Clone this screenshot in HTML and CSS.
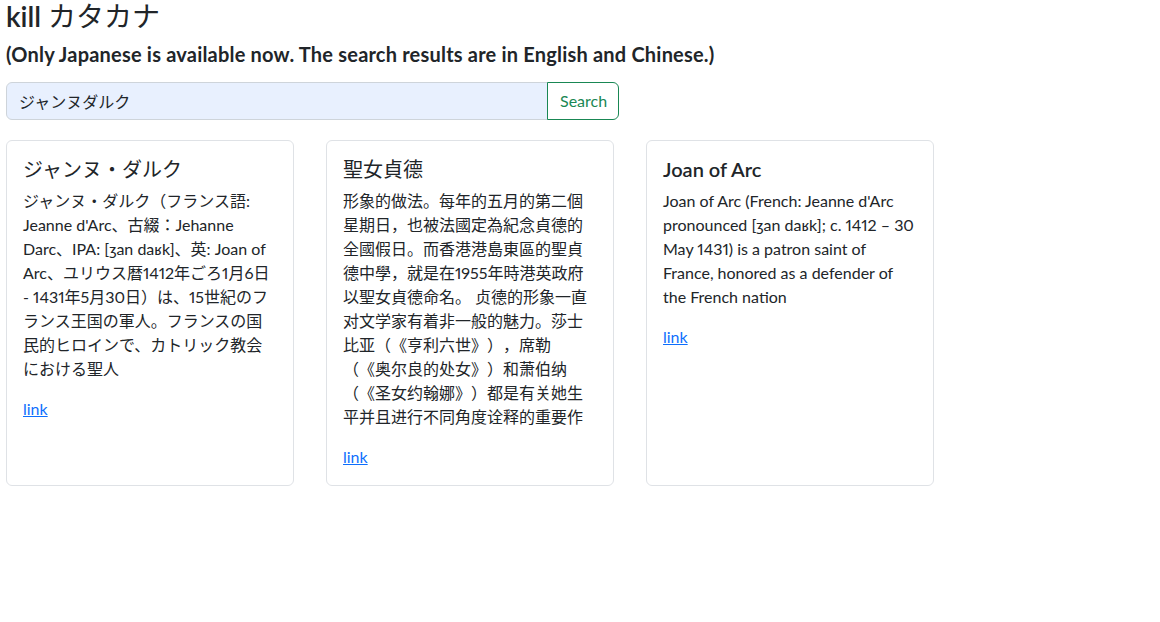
FILE: index.html
```html
<!DOCTYPE html>
<html lang="ja">
<head>
<meta charset="utf-8">
<title>kill カタカナ</title>
<link rel="stylesheet" href="styles.css">
</head>
<body>
<main class="page">
  <h3 class="page-title">kill <span class="cjk">カタカナ</span></h3>
  <h5 class="page-note">(Only Japanese is available now. The search results are in English and Chinese.)</h5>
  <form class="search">
    <input class="search-input" type="text" value="ジャンヌダルク">
    <button class="search-btn" type="button">Search</button>
  </form>
  <section class="cards">
    <article class="card">
      <h5 class="card-title cjk">ジャンヌ・ダルク</h5>
      <p class="card-text">ジャンヌ・ダルク（フランス語: Jeanne d'Arc、古綴：Jehanne Darc、IPA: [ʒan daʁk]、英: Joan of Arc、ユリウス暦1412年ごろ1月6日 - 1431年5月30日）は、15世紀のフランス王国の軍人。フランスの国民的ヒロインで、カトリック教会における聖人</p>
      <a class="card-link" href="#">link</a>
    </article>
    <article class="card">
      <h5 class="card-title cjk">聖女貞德</h5>
      <p class="card-text">形象的做法。每年的五月的第二個星期日，也被法國定為紀念貞德的全國假日。而香港港島東區的聖貞德中學，就是在1955年時港英政府以聖女貞德命名。 贞德的形象一直对文学家有着非一般的魅力。莎士比亚（《亨利六世》），席勒（《奥尔良的处女》）和萧伯纳（《圣女约翰娜》）都是有关她生平并且进行不同角度诠释的重要作</p>
      <a class="card-link" href="#">link</a>
    </article>
    <article class="card">
      <h5 class="card-title">Joan of Arc</h5>
      <p class="card-text">Joan of Arc (French: Jeanne d'Arc pronounced [ʒan daʁk]; c. 1412 – 30 May 1431) is a patron saint of France, honored as a defender of the French nation</p>
      <a class="card-link" href="#">link</a>
    </article>
  </section>
</main>
</body>
</html>
```
FILE: styles.css
```css
* { box-sizing: border-box; }
body {
  margin: 0;
  font-family: Lato, "Noto Sans CJK JP", sans-serif;
  font-size: 16px;
  line-height: 1.5;
  color: #212529;
  background: #fff;
  text-spacing-trim: space-all;
  font-variant-numeric: proportional-nums;
}
.page { padding: 0 6px; }
.page-title {
  margin: 0 0 8px;
  font-size: 28px;
  line-height: 1.2;
  font-weight: 600;
}
.cjk { font-weight: 400; }
.page-note {
  margin: 0 0 16px;
  font-size: 20px;
  line-height: 1.2;
  font-weight: 700;
  letter-spacing: 0.2px;
}
.search {
  display: flex;
  width: 613px;
  margin: 0 0 20px;
}
.search-input {
  flex: 1;
  height: 38px;
  padding: 6px 12px;
  font: inherit;
  color: #212529;
  background: #e8f0fe;
  border: 1px solid #ced4da;
  border-radius: 6px 0 0 6px;
  outline: none;
}
.search-btn {
  width: 72px;
  height: 38px;
  padding: 6px 12px;
  font: inherit;
  color: #198754;
  background: #fff;
  border: 1px solid #198754;
  border-radius: 0 6px 6px 0;
  margin-left: -1px;
}
.cards {
  display: flex;
  gap: 32px;
  align-items: stretch;
}
.card {
  width: 288px;
  padding: 16px;
  border: 1px solid #dfe2e6;
  border-radius: 6px;
}
.card-title {
  margin: 0 0 8px;
  font-size: 20px;
  line-height: 1.2;
  font-weight: 600;
}
.card-title.cjk { font-weight: 400; }
.card-text { margin: 0 0 16px; }
.card-link { color: #0d6efd; text-decoration: underline; }
```
